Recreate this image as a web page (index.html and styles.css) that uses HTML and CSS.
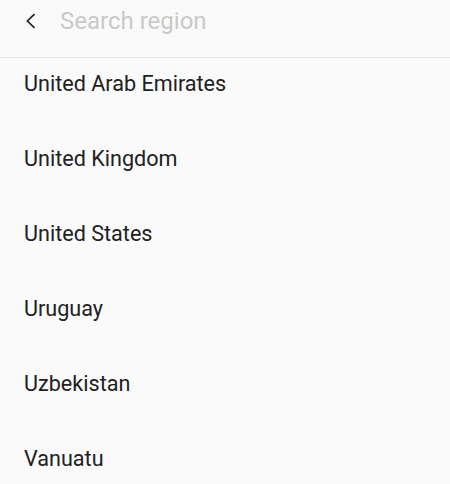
FILE: index.html
```html
<!doctype html>
<html lang="en">
<head>
    <meta charset="UTF-8">
    <title>Search region</title>
    <link rel="stylesheet" href="styles.css">
</head>
<body>
    <div class="page">
        <!-- header -->
        <div class="header">
            <div class="back">
                <svg width="12" height="16" viewBox="0 0 12 16">
                    <path d="M10.5 1.2 L3.4 8 L10.5 14.8" fill="none" stroke="#222" stroke-width="1.7"/>
                </svg>
            </div>
            <input class="search" type="text" placeholder="Search region">
        </div>
        <!-- list -->
        <ul class="list">
            <li>United Arab Emirates</li>
            <li>United Kingdom</li>
            <li>United States</li>
            <li>Uruguay</li>
            <li>Uzbekistan</li>
            <li>Vanuatu</li>
        </ul>
    </div>
</body>
</html>
```

FILE: styles.css
```css
* {
    margin: 0;
    padding: 0;
}
html, body {
    height: 100%;
    overflow: hidden;
    background: #fafafa;
}
body {
    font-family: Roboto, "Noto Sans", sans-serif;
    color: #212121;
}

/*header start*/
.header {
    position: relative;
    z-index: 2;
    display: flex;
    align-items: center;
    height: 42px;
    padding-bottom: 15px;
    border-bottom: 1px solid #e6e6e6;
    background: #fafafa;
}
.header .back {
    display: flex;
    align-items: center;
    width: 12px;
    margin: 0 24px 0 24px;
}
.header .search {
    flex: 1;
    border: 0;
    outline: none;
    background: transparent;
    font-family: inherit;
    font-size: 24px;
    color: #212121;
}
.header .search::placeholder {
    color: #c9c9c9;
}
/*header end*/

/*list start*/
.list {
    list-style: none;
    margin-top: -12px;
}
.list li {
    display: flex;
    align-items: center;
    height: 75px;
    padding-left: 24px;
    font-size: 21.6px;
}
/*list end*/
```
